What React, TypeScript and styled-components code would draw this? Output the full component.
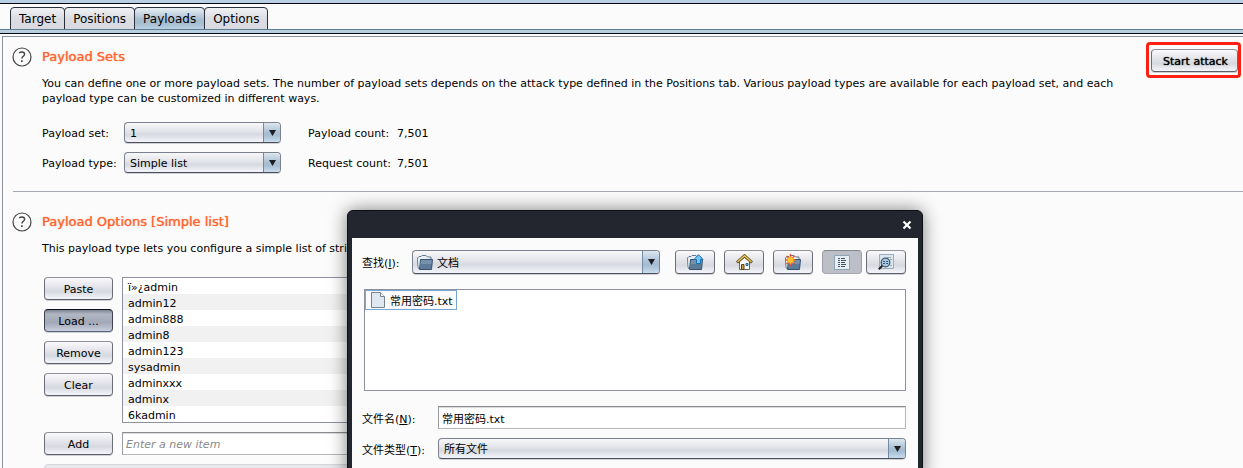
import React from "react";
import styled, { createGlobalStyle } from "styled-components";

const Global = createGlobalStyle`
  *, *::before, *::after { box-sizing: border-box; }
  html, body { margin: 0; height: 100%; overflow: hidden; background: #fbfbfb; }
  #root { height: 100%; }
  body, button, input, select {
    font-family: "DejaVu Sans", "Noto Sans CJK SC", sans-serif;
    font-size: 11px;
    color: #000;
  }
`;

const Page = styled.div`
  min-height: 100%;
  display: flex;
  flex-direction: column;
`;

const TopRule = styled.div`
  height: 4px;
  background: #b8cfe5;
  border-bottom: 1px solid #06070f;
`;

const TabBar = styled.nav`
  display: flex;
  padding: 3px 10px 0;
  height: 25px;
`;

const Tab = styled.button<{ $active?: boolean }>`
  height: 23px;
  padding: 0 8px;
  margin-right: -1px;
  font-size: 12px;
  border: 1px solid #2b303c;
  border-radius: 4px 4px 0 0;
  background: ${(p) =>
    p.$active
      ? "linear-gradient(#e9eff4, #a8bdd0 55%, #a5bccf 70%, #b9cfe2)"
      : "linear-gradient(#f0f1f4, #dcdde3 50%, #d9dae1)"};
`;

const TabRule = styled.div`
  height: 5px;
  background: #b8cfe0;
  border-top: 1px solid #5f7d92;
  border-bottom: 1px solid #06070f;
`;

const Panel = styled.main`
  flex: 1;
  margin: 2px 0 0 2px;
  padding: 10px 0 0 9px;
  border: solid #8d91a0;
  border-width: 1px 0 0 1px;
`;

const Section = styled.section`
  display: flex;
  align-items: flex-start;
  gap: 10px;
`;

const Body = styled.div`
  flex: 1;
  min-width: 0;
`;

const Heading = styled.h2`
  margin: 0;
  font-size: 13px;
  font-weight: normal;
  line-height: 20px;
  color: #ff6633;
  text-shadow: 0 0 1px #ff6633;
`;

const Description = styled.p`
  margin: 9px 0 0;
  line-height: 15px;
`;

const Divider = styled.hr`
  margin: 18px 0 20px 1px;
  border: 0;
  border-top: 1px solid #a5a9b2;
`;

const SetGrid = styled.div`
  display: grid;
  grid-template-columns: 82px 157px 27px 89px auto;
  grid-auto-rows: 21px;
  row-gap: 9px;
  align-items: center;
  justify-content: start;
  margin-top: 16px;
`;

const SetLabel = styled.label`
  padding-top: 2px;
`;

const CountLabel = styled(SetLabel)`
  grid-column: 4;
`;

const Count = styled.output`
  grid-column: 5;
  padding-top: 2px;
`;

const ComboShell = styled.div<{ $h: number }>`
  position: relative;
  display: flex;
  height: ${(p) => p.$h}px;
  border: 1px solid #7c818e;
  border-bottom-color: #4a4f5c;
  border-radius: 4px;
  overflow: hidden;
  background: linear-gradient(#f8f8fa, #e3e4e9 45%, #d6d9e0 60%, #f3f5fa);
  box-shadow: 0 1px 0 #d0d1d5;
`;

const ComboSelect = styled.select<{ $icon?: boolean }>`
  appearance: none;
  flex: 1;
  min-width: 0;
  border: 0;
  padding: 2px 22px 0 ${(p) => (p.$icon ? 24 : 5)}px;
  background: transparent;
  outline: 0;
`;

const ComboArrow = styled.span`
  position: absolute;
  inset: 0 0 0 auto;
  width: 17px;
  display: grid;
  place-items: center;
  pointer-events: none;
  border-left: 1px solid #6f8ba5;
  background: linear-gradient(#dde7f0, #a9bfd3 50%, #a5bdd2 65%, #c9dcec);
`;

const ComboIcon = styled.span`
  position: absolute;
  left: 4px;
  top: 3px;
  pointer-events: none;
`;

type ComboProps = { id: string; value: string; h?: number; icon?: React.ReactNode };

function Combo({ id, value, h = 21, icon }: ComboProps) {
  return (
    <ComboShell $h={h}>
      {icon && <ComboIcon>{icon}</ComboIcon>}
      <ComboSelect id={id} $icon={!!icon}>
        <option>{value}</option>
      </ComboSelect>
      <ComboArrow>
        <svg width="7" height="6" viewBox="0 0 7 6">
          <path d="M0 0H7L3.5 6Z" fill="#1c1f24" />
        </svg>
      </ComboArrow>
    </ComboShell>
  );
}

const Button = styled.button<{ $pressed?: boolean }>`
  height: 23px;
  padding: 2px 0 0;
  border: 1px solid;
  border-color: ${(p) => (p.$pressed ? "#10131c #3e4350 #596379" : "#8f9299 #6b6e76 #5b5e68")};
  border-radius: 4px;
  background: ${(p) =>
    p.$pressed
      ? "linear-gradient(#7f8593, #b1b6c3 20%, #a2a8b7 60%, #c8cede)"
      : "linear-gradient(#fafafc, #e4e5ea 40%, #d7d9e0 65%, #f4f6fb)"};
  box-shadow: 0 1px 0 #cfd0d4;
`;

const AttackFrame = styled.div`
  margin: -5px 2px 0 0;
  padding: 4px 0 3px 2px;
  border: 3px solid #fd1f12;
  border-radius: 4px;
`;

const AttackButton = styled(Button)`
  display: block;
  width: 87px;
  padding-left: 2px;
  text-shadow: 0 0 1px #000;
`;

const ListGrid = styled.div`
  display: grid;
  grid-template-columns: 69px 420px;
  column-gap: 9px;
  row-gap: 9px;
  margin: 21px 0 0 2px;
`;

const ButtonColumn = styled.div`
  display: flex;
  flex-direction: column;
  gap: 9px;
`;

const ItemList = styled.ul`
  margin: 0;
  padding: 0;
  list-style: none;
  border: 1px solid #8d91a0;
  background: #fff;
`;

const Item = styled.li`
  height: 16px;
  line-height: 20px;
  padding-left: 5px;
  &:nth-child(even) { background: #f1f1f1; }
`;

const TextField = styled.input`
  width: 100%;
  height: 23px;
  padding: 1px 3px 0;
  border: 1px solid #b5b6ba;
  border-top-color: #8b8c90;
  border-left-color: #9a9ba0;
  background: #fff;
  box-shadow: inset 0 1px 0 #dcdcde;
  outline: 0;
  &::placeholder { color: #8a8a8a; font-style: italic; opacity: 1; }
`;

const AddFrom = styled.select`
  appearance: none;
  grid-column: 1 / -1;
  height: 23px;
  border: 1px solid #c5c7d0;
  border-radius: 4px;
  background: #dfe0e7;
`;

const Dialog = styled.div`
  position: absolute;
  left: 347px;
  top: 210px;
  width: 576px;
  border: 1px solid #0c0e14;
  border-radius: 6px 6px 0 0;
  background: #23262f;
  box-shadow: 0 0 18px rgba(0, 0, 0, 0.5);
  padding: 0 4px;
`;

const TitleBar = styled.header`
  height: 27px;
  display: flex;
  align-items: center;
  justify-content: flex-end;
  padding-right: 6px;
`;

const CloseButton = styled.button`
  display: grid;
  padding: 0;
  border: 0;
  background: none;
`;

const DialogBody = styled.div`
  padding: 12px 12px 20px 10px;
  background: #fbfbfb;
`;

const Toolbar = styled.div`
  display: grid;
  grid-template-columns: 50px 248px 1fr;
  align-items: center;
`;

const ToolButtons = styled.div`
  display: flex;
  justify-content: flex-end;
  gap: 9px;
`;

const ViewModes = styled.div`
  display: flex;
  gap: 4px;
`;

const ToolButton = styled(Button)<{ $on?: boolean }>`
  display: grid;
  place-items: center;
  width: 40px;
  height: 24px;
  padding: 0;
  ${(p) => p.$on && "background: #bcbec8; border-color: #85878f #a0a2aa #a5a7ae; box-shadow: none;"}
`;

const FileArea = styled.div`
  height: 102px;
  margin: 15px 0 0 2px;
  border: 1px solid #8d91a0;
  background: #fff;
`;

const FileItem = styled.button`
  display: flex;
  align-items: center;
  gap: 5px;
  height: 20px;
  padding: 0 3px 0 5px;
  border: 1px solid #76a5d6;
  background: #fbfbfb;
`;

const Fields = styled.div`
  display: grid;
  grid-template-columns: 76px 1fr;
  row-gap: 9px;
  align-items: center;
  margin-top: 15px;
`;

const HelpIcon = () => (
  <svg width="20" height="20" viewBox="0 0 20 20" fill="none" stroke="#444">
    <circle cx="10" cy="10" r="9" strokeWidth="1.2" />
    <path d="M7.2 6C7.9 5.300 8.900 5 10 5c1.600 0 2.600.9 2.600 2.200 0 2-2.700 2.200-2.700 4.300" strokeWidth="1.400" />
    <path d="M9.900 13.200v1.800" strokeWidth="1.600" />
  </svg>
);

const FolderShape = () => (
  <>
    <path d="M1.500 14.500C.8 13 .5 8 .5 4L2 2.500h2L5 1.500h4L10.500 3H14v3L4 13Z" fill="#e8eff5" stroke="#5f7a90" />
    <path d="M3.500 5.500h12l-1 9.500h-11.500Z" fill="#7592ad" />
    <path d="M4 10h11l-.5 5H3Z" fill="#5c7b99" />
    <path d="M3.500 5.500h12l-1 10H2.500Z" fill="none" stroke="#38526b" />
  </>
);

const FolderIcon = () => (
  <svg width="16" height="16" viewBox="0 0 16 16"><FolderShape /></svg>
);

const UpIcon = () => (
  <svg width="17" height="16" viewBox="0 0 17 16">
    <FolderShape />
    <path d="M11.500.7L16 5.500h-2.500v4h-4v-4H7Z" fill="#6fc4fa" stroke="#1a6fb0" />
  </svg>
);

const HomeIcon = () => (
  <svg width="17" height="16" viewBox="0 0 17 16">
    <path d="M3.500 7v8.500h10V7L8.500 3Z" fill="#fafafa" stroke="#6b665c" />
    <path d="M1 8.500L8.500 1.800 16 8.500" fill="none" stroke="#5b4510" strokeWidth="3" />
    <path d="M1.500 8L8.500 1.800l7 6.200" fill="none" stroke="#e9c75c" strokeWidth="1.400" />
    <path d="M5.500 10.500h2.500v5H5.500z" fill="#c79a3c" stroke="#5b4510" />
    <path d="M10 9.500h2v2h-2z" fill="#8fc0ee" stroke="#2b5f94" />
  </svg>
);

const NewFolderIcon = () => (
  <svg width="17" height="16" viewBox="0 0 17 16">
    <FolderShape />
    <path d="M5.500 0v12M0 6h11M1.500 2l8 8M9.500 2l-8 8" stroke="#f0442c" strokeWidth="1.300" />
    <path d="M5.500 2l1 2 2-.5-.5 2 1.500.5-1.500 1 .5 1.800-2-.4-1 1.900-1-1.900-2 .4.5-1.800-1.500-1 1.500-.5-.5-2 2 .5Z" fill="#ffc52e" stroke="#ff9520" strokeWidth=".6" />
  </svg>
);

const ListIcon = () => (
  <svg width="16" height="15" viewBox="0 0 16 15">
    <path d="M.5.5h15v14H.5z" fill="#e6eef5" stroke="#8ea3b6" />
    <path d="M4 3.500h2M7 3.500h4M4 5.500h2M7 5.500h5M4 7.500h2M7 7.500h4M4 9.500h2M7 9.500h5M4 11.500h2M7 11.500h4" stroke="#4a525b" />
  </svg>
);

const DetailIcon = () => (
  <svg width="16" height="16" viewBox="0 0 16 16">
    <path d="M1.500.5h14v14h-14z" fill="#dbe6ef" stroke="#9aaebf" />
    <path d="M9 3.500h4M12 5.500h2M12 11.500h2" stroke="#9aa8b4" />
    <path d="M4.500 11.500L.8 15.200" stroke="#222" strokeWidth="2" />
    <circle cx="7.500" cy="8.500" r="4.300" fill="#a6c8e2" stroke="#4c5a68" strokeWidth="1.300" />
    <path d="M5 7.500h2M8 7.500h2M5 9.500h2M8 9.500h2" stroke="#3a5a7a" />
  </svg>
);

const FileIcon = () => (
  <svg width="14" height="16" viewBox="0 0 14 16">
    <path d="M.5.5h9l4 4v11H.5z" fill="#dfe8f1" stroke="#76838f" />
    <path d="M9.500.5v4h4" fill="#fff" stroke="#76838f" />
  </svg>
);

const entries = ["ï»¿admin", "admin12", "admin888", "admin8", "admin123", "sysadmin", "adminxxx", "adminx", "6kadmin"];

export default function App() {
  return (
    <Page>
      <Global />
      <TopRule />
      <TabBar>
        <Tab>Target</Tab>
        <Tab>Positions</Tab>
        <Tab $active>Payloads</Tab>
        <Tab>Options</Tab>
      </TabBar>
      <TabRule />
      <Panel>
        <Section>
          <HelpIcon />
          <Body>
            <Heading>Payload Sets</Heading>
            <Description>
              You can define one or more payload sets. The number of payload sets depends on the attack type defined in the Positions tab. Various payload types are available for each payload set, and each payload type can be customized in different ways.
            </Description>
            <SetGrid>
              <SetLabel htmlFor="set">Payload set:</SetLabel>
              <Combo id="set" value="1" />
              <CountLabel htmlFor="pc">Payload count:</CountLabel>
              <Count id="pc">7,501</Count>
              <SetLabel htmlFor="type">Payload type:</SetLabel>
              <Combo id="type" value="Simple list" />
              <CountLabel htmlFor="rc">Request count:</CountLabel>
              <Count id="rc">7,501</Count>
            </SetGrid>
          </Body>
          <AttackFrame>
            <AttackButton>Start attack</AttackButton>
          </AttackFrame>
        </Section>
        <Divider />
        <Section>
          <HelpIcon />
          <Body>
            <Heading>Payload Options [Simple list]</Heading>
            <Description>
              This payload type lets you configure a simple list of strings that are used as payloads.
            </Description>
            <ListGrid>
              <ButtonColumn>
                <Button>Paste</Button>
                <Button $pressed>Load ...</Button>
                <Button>Remove</Button>
                <Button>Clear</Button>
              </ButtonColumn>
              <ItemList>
                {entries.map((e) => <Item key={e}>{e}</Item>)}
              </ItemList>
              <Button>Add</Button>
              <TextField aria-label="New item" placeholder="Enter a new item" />
              <AddFrom aria-label="Add from list" disabled />
            </ListGrid>
          </Body>
        </Section>
      </Panel>
      <Dialog role="dialog" aria-label="Open">
        <TitleBar>
          <CloseButton aria-label="Close">
            <svg width="10" height="10" viewBox="0 0 10 10">
              <path d="M1.500 1.500l7 7M8.500 1.500l-7 7" stroke="#fff" strokeWidth="2.200" />
            </svg>
          </CloseButton>
        </TitleBar>
        <DialogBody>
          <Toolbar>
            <label htmlFor="look">查找(<u>I</u>):</label>
            <Combo id="look" value="文档" h={24} icon={<FolderIcon />} />
            <ToolButtons>
              <ToolButton aria-label="Up one level"><UpIcon /></ToolButton>
              <ToolButton aria-label="Home"><HomeIcon /></ToolButton>
              <ToolButton aria-label="New folder"><NewFolderIcon /></ToolButton>
              <ViewModes>
                <ToolButton $on aria-label="List"><ListIcon /></ToolButton>
                <ToolButton aria-label="Details"><DetailIcon /></ToolButton>
              </ViewModes>
            </ToolButtons>
          </Toolbar>
          <FileArea>
            <FileItem><FileIcon />常用密码.txt</FileItem>
          </FileArea>
          <Fields>
            <label htmlFor="fname">文件名(<u>N</u>):</label>
            <TextField id="fname" defaultValue="常用密码.txt" />
            <label htmlFor="ftype">文件类型(<u>T</u>):</label>
            <Combo id="ftype" value="所有文件" />
          </Fields>
        </DialogBody>
      </Dialog>
    </Page>
  );
}
